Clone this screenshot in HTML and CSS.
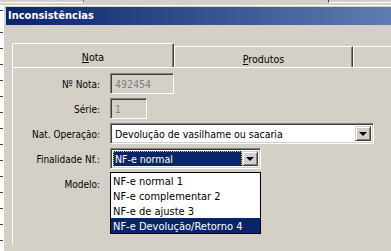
FILE: index.html
```html
<!DOCTYPE html>
<html lang="pt">

<head>
    <meta charset="UTF-8">
    <title>Inconsistências</title>
    <link rel="stylesheet" href="styles.css">
</head>

<body>
    <div class="back-top">
        <div class="back-left-win"></div>
        <div class="back-right-win"></div>
    </div>
    <div class="desk">
        <div class="back-strip"></div>
        <div class="dialog">
            <div class="title-bar">Inconsistências</div>

            <div class="tabs">
                <div class="tab tab-active"><span><u>N</u>ota</span></div>
                <div class="tab"><span><u>P</u>rodutos</span></div>
                <div class="tab tab-cut"></div>
            </div>

            <div class="tab-page">
                <div class="form">
                    <label>Nº Nota:</label>
                    <div class="field field-disabled field-nota">492454</div>

                    <label>Série:</label>
                    <div class="field field-disabled field-serie">1</div>

                    <label>Nat. Operação:</label>
                    <div class="combo combo-nat">
                        <div class="combo-text">Devolução de vasilhame ou sacaria</div>
                        <div class="combo-btn"><span class="arrow"></span></div>
                    </div>

                    <label>Finalidade Nf.:</label>
                    <div class="combo combo-fin">
                        <div class="combo-text combo-selected"><span class="focus">NF-e normal</span></div>
                        <div class="combo-btn"><span class="arrow"></span></div>
                        <ul class="drop-list">
                            <li>NF-e normal 1</li>
                            <li>NF-e complementar 2</li>
                            <li>NF-e de ajuste 3</li>
                            <li class="selected">NF-e Devolução/Retorno 4</li>
                        </ul>
                    </div>

                    <label>Modelo:</label>
                    <div class="field-empty"></div>
                </div>
            </div>
        </div>
    </div>
</body>

</html>
```

FILE: styles.css
```css
html {
    overflow: hidden;
}

body {
    margin: 0;
    width: 391px;
    height: 251px;
    overflow: hidden;
    background: #d4d0c8;
    font-family: "DejaVu Sans Condensed", "Liberation Sans", sans-serif;
    font-size: 10px;
    color: #000;
}

.back-top {
    height: 5px;
    display: flex;
    justify-content: space-between;
}

.back-left-win {
    width: 83px;
    height: 2px;
    border-bottom: 1px solid #fff;
    border-right: 1px solid #808080;
}

.back-right-win {
    width: 62px;
    height: 2px;
    border-bottom: 1px solid #fff;
    border-left: 1px solid #404040;
}

.desk {
    display: flex;
    height: 246px;
}

.back-strip {
    width: 3px;
    flex-shrink: 0;
    background: repeating-linear-gradient(to bottom, #fff 0, #fff 15px, #404040 15px, #404040 16px);
    background-position: 0 12px;
}

.dialog {
    flex: 1;
    min-width: 0;
    overflow: hidden;
    border-top: 1px solid #fff;
    border-left: 1px solid #fff;
    padding: 1px 0 0 2px;
}

.title-bar {
    height: 18px;
    line-height: 18px;
    padding-left: 2px;
    color: #fff;
    font-weight: bold;
    font-size: 11px;
    background: linear-gradient(to right, #0a246a 0, #a6caf0 720px);
}

.tabs {
    display: flex;
    align-items: flex-end;
    margin: 19px 0 0 6px;
    height: 23px;
    position: relative;
    z-index: 1;
}

.tab {
    height: 20px;
    width: 177px;
    border-top: 1px solid #fff;
    border-left: 1px solid #fff;
    border-right: 1px solid #404040;
    box-shadow: inset -1px 0 #808080;
    text-align: center;
    line-height: 25px;
    font-size: 10.5px;
    background: #d4d0c8;
}

.tab-active {
    width: 160px;
    height: 23px;
    border-radius: 2px 2px 0 0;
    line-height: 27px;
}

.tab-cut {
    flex: 1;
    border-right: 0;
    box-shadow: none;
}

.tab-page {
    margin-left: 6px;
    height: 172px;
    border-top: 1px solid #fff;
    border-left: 1px solid #fff;
    padding: 5px 0 0 0;
}

.form {
    display: grid;
    grid-template-columns: 87px auto;
    grid-auto-rows: 21px;
    row-gap: 4px;
    column-gap: 10px;
    align-items: center;
}

.form label {
    text-align: right;
    padding-top: 2px;
}

.field,
.combo {
    box-sizing: border-box;
    height: 21px;
    border-top: 1px solid #808080;
    border-left: 1px solid #808080;
    border-bottom: 1px solid #fff;
    border-right: 1px solid #fff;
    box-shadow: inset 1px 1px #404040, inset -1px -1px #d4d0c8;
    font-size: 10.5px;
}

.field {
    padding: 4px 0 0 4px;
}

.field-disabled {
    color: #808080;
    background: #d4d0c8;
}

.field-nota {
    width: 64px;
}

.field-serie {
    width: 37px;
}

.combo {
    display: flex;
    background: #fff;
    padding: 2px;
    position: relative;
}

.combo-nat {
    width: 264px;
}

.combo-fin {
    width: 151px;
}

.combo-text {
    flex: 1;
    padding: 2px 0 0 2px;
    white-space: nowrap;
    overflow: hidden;
}

.combo-selected {
    background: #0a246a;
    color: #fff;
    padding: 0;
}

.focus {
    display: block;
    height: 15px;
    padding: 1px 0 0 1px;
    border: 1px dotted #e8c878;
}

.combo-btn {
    width: 16px;
    box-sizing: border-box;
    border-top: 1px solid #d4d0c8;
    border-left: 1px solid #d4d0c8;
    border-right: 1px solid #404040;
    border-bottom: 1px solid #404040;
    box-shadow: inset 1px 1px #fff, inset -1px -1px #808080;
    background: #d4d0c8;
    display: flex;
    align-items: center;
    justify-content: center;
}

.arrow {
    width: 0;
    height: 0;
    border-left: 4px solid transparent;
    border-right: 4px solid transparent;
    border-top: 4px solid #000;
}

.drop-list {
    position: absolute;
    left: -1px;
    top: 23px;
    width: 151px;
    margin: 0;
    padding: 0;
    list-style: none;
    background: #fff;
    border: 1px solid #000;
    box-sizing: border-box;
    font-size: 11px;
}

.drop-list li {
    height: 15px;
    line-height: 17px;
    padding-left: 2px;
    white-space: nowrap;
}

.drop-list .selected {
    background: #0a246a;
    color: #fff;
}

.field-empty {
    height: 21px;
}
```
